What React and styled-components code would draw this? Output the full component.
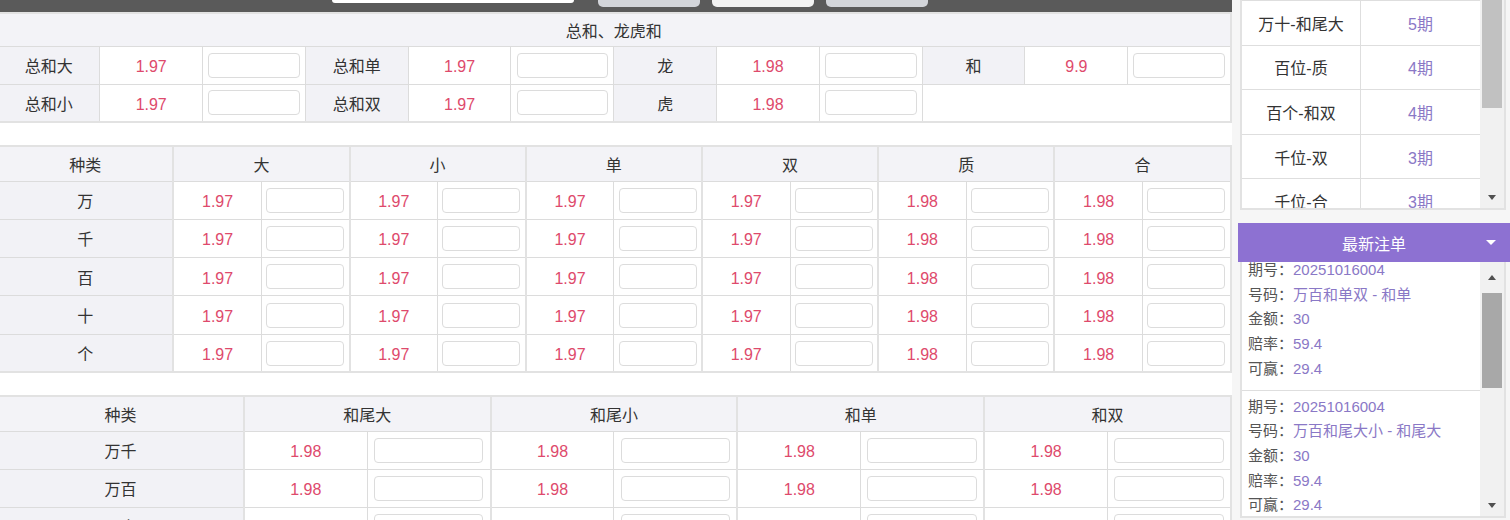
import React, { useLayoutEffect, useRef } from 'react';
import styled, { createGlobalStyle } from 'styled-components';

const GlobalStyle = createGlobalStyle`
  html, body { margin: 0; padding: 0; background: #fff; overflow: hidden; }
  body {
    font-family: "Liberation Sans", "Noto Sans CJK SC", sans-serif;
    color: #333;
    font-size: 16px;
  }
  * { box-sizing: border-box; }
`;

const Page = styled.div`
  display: flex;
  align-items: flex-start;
  width: 1510px;
  height: 520px;
  overflow: hidden;
`;

const Main = styled.main`
  flex: 0 0 1236px;
  min-width: 0;
  margin-left: -4px;
  display: flex;
  flex-direction: column;
`;

const TopBar = styled.div`
  height: 12px;
  background: #5a5a5a;
  display: flex;
  align-items: flex-start;
  padding-left: 336px;
`;

const SearchBox = styled.div`
  width: 242px;
  height: 3px;
  background: #fff;
  border-radius: 0 0 3px 3px;
  margin-right: 24px;
`;

const BarButton = styled.div`
  width: 102px;
  height: 7px;
  border-radius: 0 0 5px 5px;
  background: ${p => (p.$light ? '#f2f2f2' : '#d3d5da')};
  margin-right: 12px;
`;

const Grid = styled.table`
  width: 1234px;
  border-collapse: collapse;
  table-layout: fixed;
  border: 2px solid #e2e2e2;
  margin-bottom: ${p => p.$gap || 0}px;
`;

const Col = styled.col`
  width: ${p => p.$w}px;
`;

const HeadCell = styled.th`
  height: ${p => p.$h || 35}px;
  padding: 0;
  font-weight: normal;
  font-size: 16px;
  color: #333;
  background: #f3f3f7;
  border: 1px solid #dcdcdc;
  border-right: ${p => (p.$group ? '2px solid #e2e2e2' : '1px solid #dcdcdc')};
  text-align: center;
`;

const Cell = styled.td`
  height: ${p => p.$h || 38}px;
  padding: 0;
  text-align: center;
  border: 1px solid #dcdcdc;
  ${p => p.$group && 'border-right: 2px solid #e2e2e2;'}
`;

const LabelCell = styled(Cell)`
  background: #f2f2f6;
  color: #333;
`;

const OddsCell = styled(Cell)`
  color: #de4a6c;
  background: #fff;
  padding-top: 4px;
`;

const EmptyCell = styled.td`
  border: 1px solid #dcdcdc;
  border-right: none;
  border-bottom: none;
  background: #fff;
`;

const AmountInput = styled.input`
  display: block;
  margin: 0 auto;
  width: 90%;
  height: 25px;
  border: 1px solid #dcdcdc;
  border-radius: 4px;
  background: #fff;
  outline: none;
`;

const Side = styled.aside`
  flex: 0 0 278px;
  height: 520px;
  background: #f6f6f6;
  padding-left: 6px;
  display: flex;
  flex-direction: column;
`;

const Panel = styled.div`
  margin: 0 4px 0 2px;
  height: ${p => p.$h}px;
  display: flex;
  background: #fff;
  border: 2px solid #e2e2e2;
  border-top: none;
`;

const RankList = styled.div`
  flex: 1;
  overflow: hidden;
  border-top: 1px solid #dedede;
`;

const RankRow = styled.div`
  height: 44.6px;
  display: grid;
  grid-template-columns: 1fr 1fr;
  border-bottom: 1px solid #dedede;
`;

const RankName = styled.div`
  display: flex;
  align-items: center;
  justify-content: center;
  border-right: 1px solid #dedede;
  color: #333;
`;

const RankCount = styled.div`
  display: flex;
  align-items: center;
  justify-content: center;
  color: #8a78c6;
`;

const Track = styled.div`
  flex: 0 0 24px;
  background: #f1f1f1;
  display: flex;
  flex-direction: column;
  align-items: center;
`;

const Arrow = styled.div`
  flex: 0 0 ${p => p.$h}px;
  width: 100%;
  display: flex;
  align-items: center;
  justify-content: center;
  &::after {
    content: '';
    border-left: 4px solid transparent;
    border-right: 4px solid transparent;
    ${p => (p.$up ? 'border-bottom: 5px solid #505050;' : 'border-top: 5px solid #505050;')}
  }
`;

const Thumb = styled.div`
  width: 20px;
  flex: 0 0 ${p => p.$h}px;
  background: ${p => (p.$dark ? '#a8a8a8' : '#c1c1c1')};
`;

const Spacer = styled.div`
  flex: 1;
`;

const NoticeHeader = styled.div`
  margin-top: 13px;
  height: 39px;
  background: #8d71d2;
  color: #fff;
  display: grid;
  grid-template-columns: 1fr auto 1fr;
  align-items: center;
  font-size: 16px;
`;

const NoticeTitle = styled.span`
  grid-column: 2;
`;

const Caret = styled.span`
  justify-self: end;
  margin-right: 14px;
  border-left: 5px solid transparent;
  border-right: 5px solid transparent;
  border-top: 5px solid #fff;
`;

const NotesList = styled.div`
  flex: 1;
  overflow: hidden;
`;

const Note = styled.div`
  padding: 4px 6px 8px;
  border-bottom: 1px solid #dedede;
`;

const NoteLine = styled.div`
  font-size: 15px;
  line-height: 24.7px;
  color: #555;
  white-space: nowrap;
`;

const NoteValue = styled.span`
  color: #8a78c6;
`;

const table1 = [
  [['总和大', '1.97'], ['总和单', '1.97'], ['龙', '1.98'], ['和', '9.9']],
  [['总和小', '1.97'], ['总和双', '1.97'], ['虎', '1.98']],
];

const t2Cols = [['大', '1.97'], ['小', '1.97'], ['单', '1.97'], ['双', '1.97'], ['质', '1.98'], ['合', '1.98']];
const t2Rows = ['万', '千', '百', '十', '个'];

const t3Cols = [['和尾大', '1.98'], ['和尾小', '1.98'], ['和单', '1.98'], ['和双', '1.98']];
const t3Rows = ['万千', '万百', '万十', '万个'];

const ranks = [
  ['万十-和尾大', '5期'],
  ['百位-质', '4期'],
  ['百个-和双', '4期'],
  ['千位-双', '3期'],
  ['千位-合', '3期'],
];

const notes = [
  { no: '20251016004', code: '万百和单双 - 和单', amount: '30', odds: '59.4', win: '29.4' },
  { no: '20251016004', code: '万百和尾大小 - 和尾大', amount: '30', odds: '59.4', win: '29.4' },
  { no: '20251016003', code: '万千和尾大小 - 和尾小', amount: '30', odds: '59.4', win: '29.4' },
];

function Bet() {
  return <AmountInput type="text" />;
}

export default function App() {
  const notesRef = useRef(null);
  useLayoutEffect(() => {
    if (notesRef.current) notesRef.current.scrollTop = 8;
  }, []);

  return (
    <>
      <GlobalStyle />
      <Page>
        <Main>
          <TopBar>
            <SearchBox />
            <BarButton />
            <BarButton $light />
            <BarButton />
          </TopBar>

          <Grid $gap={22}>
            <colgroup>
              {Array.from({ length: 12 }).map((_, i) => (
                <Col key={i} $w={102.8} />
              ))}
            </colgroup>
            <tbody>
              <tr>
                <HeadCell colSpan={12} $h={33}>总和、龙虎和</HeadCell>
              </tr>
              {table1.map((row, ri) => (
                <tr key={ri}>
                  {row.map(([name, odd]) => (
                    <React.Fragment key={name}>
                      <LabelCell>{name}</LabelCell>
                      <OddsCell>{odd}</OddsCell>
                      <Cell><Bet /></Cell>
                    </React.Fragment>
                  ))}
                  {row.length < 4 && <EmptyCell colSpan={3} />}
                </tr>
              ))}
            </tbody>
          </Grid>

          <Grid $gap={22}>
            <colgroup>
              <Col $w={176.3} />
              {Array.from({ length: 12 }).map((_, i) => (
                <Col key={i} $w={88.1} />
              ))}
            </colgroup>
            <tbody>
              <tr>
                <HeadCell $group>种类</HeadCell>
                {t2Cols.map(([c]) => (
                  <HeadCell key={c} colSpan={2} $group>{c}</HeadCell>
                ))}
              </tr>
              {t2Rows.map(r => (
                <tr key={r}>
                  <LabelCell $group $h={38.3}>{r}</LabelCell>
                  {t2Cols.map(([c, odd]) => (
                    <React.Fragment key={c}>
                      <OddsCell $h={38.3}>{odd}</OddsCell>
                      <Cell $group $h={38.3}><Bet /></Cell>
                    </React.Fragment>
                  ))}
                </tr>
              ))}
            </tbody>
          </Grid>

          <Grid>
            <colgroup>
              <Col $w={246.8} />
              {Array.from({ length: 8 }).map((_, i) => (
                <Col key={i} $w={123.4} />
              ))}
            </colgroup>
            <tbody>
              <tr>
                <HeadCell $group>种类</HeadCell>
                {t3Cols.map(([c]) => (
                  <HeadCell key={c} colSpan={2} $group>{c}</HeadCell>
                ))}
              </tr>
              {t3Rows.map(r => (
                <tr key={r}>
                  <LabelCell $group>{r}</LabelCell>
                  {t3Cols.map(([c, odd]) => (
                    <React.Fragment key={c}>
                      <OddsCell>{odd}</OddsCell>
                      <Cell $group><Bet /></Cell>
                    </React.Fragment>
                  ))}
                </tr>
              ))}
            </tbody>
          </Grid>
        </Main>

        <Side>
          <Panel $h={210}>
            <RankList>
              {ranks.map(([name, count]) => (
                <RankRow key={name}>
                  <RankName>{name}</RankName>
                  <RankCount>{count}</RankCount>
                </RankRow>
              ))}
            </RankList>
            <Track>
              <Thumb $h={108} />
              <Spacer />
              <Arrow $h={22} />
            </Track>
          </Panel>

          <NoticeHeader>
            <NoticeTitle>最新注单</NoticeTitle>
            <Caret />
          </NoticeHeader>

          <Panel $h={256}>
            <NotesList ref={notesRef}>
              {notes.map((n, i) => (
                <Note key={i}>
                  <NoteLine>期号：<NoteValue>{n.no}</NoteValue></NoteLine>
                  <NoteLine>号码：<NoteValue>{n.code}</NoteValue></NoteLine>
                  <NoteLine>金额：<NoteValue>{n.amount}</NoteValue></NoteLine>
                  <NoteLine>赔率：<NoteValue>{n.odds}</NoteValue></NoteLine>
                  <NoteLine>可赢：<NoteValue>{n.win}</NoteValue></NoteLine>
                </Note>
              ))}
            </NotesList>
            <Track>
              <Arrow $up $h={31} />
              <Thumb $h={95} $dark />
              <Spacer />
              <Arrow $h={22} />
            </Track>
          </Panel>
        </Side>
      </Page>
    </>
  );
}
